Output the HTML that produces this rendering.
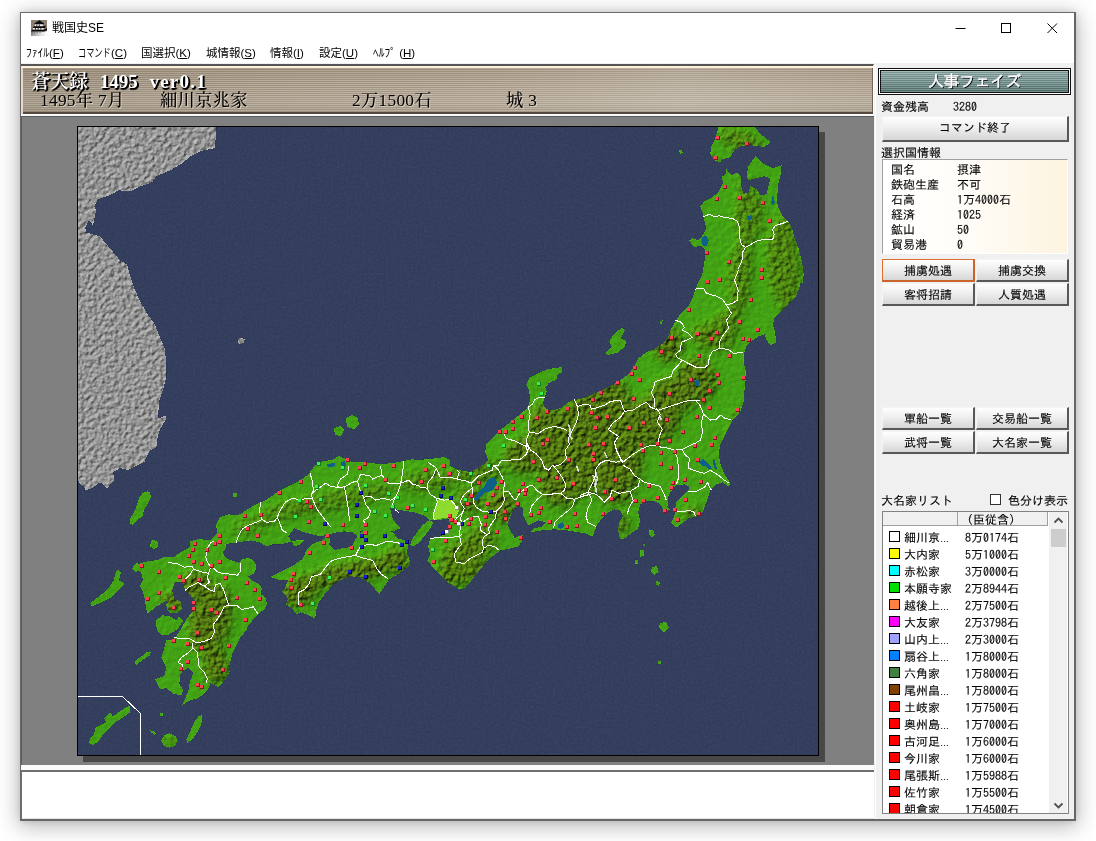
<!DOCTYPE html>
<html lang="ja">
<head>
<meta charset="utf-8">
<title>戦国史SE</title>
<style>
*{box-sizing:border-box;margin:0;padding:0}
html,body{width:1096px;height:841px;overflow:hidden;background:#fff}
body{position:relative;font-family:"Liberation Sans","IPAGothic","Noto Sans CJK JP",sans-serif;font-size:12px;color:#000}
.abs{position:absolute}
#win{position:absolute;left:20px;top:12px;width:1056px;height:809px;background:#f0f0f0;border:1px solid #6a6a6a;border-right:2px solid #666;border-bottom:2px solid #666;box-shadow:0 4px 20px 2px rgba(0,0,0,.27),0 0 6px rgba(0,0,0,.12)}
#title{position:absolute;left:0;top:0;width:1053px;height:30px;background:#fff}
#title .cap{position:absolute;left:31px;top:6px;font:12px/18px "Liberation Sans","Noto Sans CJK JP",sans-serif}
#menu{position:absolute;left:0;top:30px;width:1053px;height:20px;background:#fff;font:11.5px/20px "Liberation Sans","Noto Sans CJK JP",sans-serif;white-space:nowrap}
#menu>span{position:absolute;top:0}
#menu u{text-decoration:underline}
#hdr{position:absolute;left:0px;top:51px;width:853px;height:52px;border-top:2px solid #555;border-bottom:2px solid #fafafa;border-right:1px solid #fff;
 box-shadow:inset 0 2px 0 #fff0dc,inset 2px 0 0 #e6dac4,inset 0 -2px 0 #544a40,inset -1px 0 0 #6f655a;
 background:linear-gradient(90deg,rgba(0,0,0,.07) 0,rgba(0,0,0,.02) 25%,rgba(255,255,255,.04) 55%,rgba(255,255,255,.16) 78%,rgba(255,255,255,.06) 100%),linear-gradient(180deg,rgba(60,40,20,.10) 0,rgba(0,0,0,0) 40%,rgba(255,255,255,.08) 75%,rgba(0,0,0,.04) 100%),repeating-linear-gradient(180deg,#bdb19f 0,#bdb19f 1px,#a19381 1px,#a19381 2px)}
#hdr .l1{position:absolute;left:10px;top:4px;word-spacing:7px;font:600 19px/24px "Liberation Serif","Noto Serif CJK SC",serif;color:#fff;text-shadow:1px 1px 0 #000,2px 1px 0 #000,1px 2px 1px #000;white-space:pre}
#hdr .l2{position:absolute;top:23px;letter-spacing:.3px;font:500 17.300px/24px "Liberation Serif","Noto Serif CJK SC",serif;color:#000;text-shadow:1px 1px 0 rgba(225,215,200,.8);white-space:pre}
#mapbg{position:absolute;left:0;top:103px;width:853px;height:649px;background:#808080;border-top:1px solid #5a5a5a;border-left:1px solid #5a5a5a}
#msg{position:absolute;left:0;top:752px;width:853px;height:54px;background:#fff;border-top:5px solid #fbfbfb;box-shadow:inset 1px 2px 0 #6f6f6f,inset 0 -1px 0 #e3e3e3}
#side{position:absolute;left:854px;top:50px;width:199px;height:756px;background:#f0f0f0;border-left:1px solid #fff;font:12px/12px "IPAGothic","Noto Sans CJK JP",sans-serif}
#side .t{position:absolute;white-space:nowrap;-webkit-text-stroke:.1px #000;font:12px/12px "IPAGothic","Noto Sans CJK JP",sans-serif}
.btn{position:absolute;-webkit-text-stroke:.1px #000;background:linear-gradient(180deg,#fefefe 0,#efefef 45%,#d6d6d6 100%);border:1px solid #f4f4f4;border-right:2px solid #585858;border-bottom:2px solid #585858;text-align:center;font:12px/20px "IPAGothic","Noto Sans CJK JP",sans-serif}
</style>
</head>
<body>
<div id="win">
 <div id="title">
  <svg class="abs" style="left:10px;top:7px" width="16" height="16" viewBox="0 0 16 16"><defs><linearGradient id="icg" x1="0" y1="0" x2="1" y2="0"><stop offset="0" stop-color="#8f8f8c"/><stop offset=".55" stop-color="#d8d8d8"/><stop offset="1" stop-color="#fdfdfd"/></linearGradient></defs><rect width="16" height="16" fill="#8b8173"/><rect y="11.300" width="16" height="4.700" fill="url(#icg)"/><path d="M8.5 .2 L12.800 3.200 L13.200 4.300 H2.800 L3.600 3.200 Z" fill="#0b0b0b"/><rect x="3.800" y="4.400" width="8" height="1.900" fill="#f6f6f6"/><path d="M5.800 4.400v1.900M8.300 4.400v1.900" stroke="#222" stroke-width=".9"/><path d="M1.800 7.900 L2.800 6.300 H12.800 L14.800 5.300 L14.200 7.900 Z" fill="#0b0b0b"/><rect x="2" y="8" width="10.500" height="1.700" fill="#f6f6f6"/><path d="M4.500 8v1.700M7.200 8v1.700M9.800 8v1.700" stroke="#222" stroke-width=".9"/><path d="M0 11.600 L.8 9.700 H12.800 L16 8 V10 L13.500 11.600 Z" fill="#0b0b0b"/><path d="M1 12v1.600M3.200 12v1.300M6 12v1.300M9 12v1" stroke="#555" stroke-width=".8"/></svg>
  <div class="cap">戦国史SE</div>
  <svg class="abs" style="left:929px;top:9px" width="110" height="12" viewBox="0 0 110 12" fill="none" stroke="#000" stroke-width="1"><path d="M5.5 6.5 H15.5"/><rect x="51.5" y="1.500" width="9" height="9"/><path d="M97.5 1.500 L107 11 M107 1.500 L97.5 11"/></svg>
 </div>
 <div id="menu">
  <span style="left:5px">ﾌｧｲﾙ(<u>F</u>)</span>
  <span style="left:57px"><span style="display:inline-block;width:33px;transform:scaleX(.71);transform-origin:0 0;white-space:nowrap">コマンド</span>(<u>C</u>)</span>
  <span style="left:120px">国選択(<u>K</u>)</span>
  <span style="left:185px">城情報(<u>S</u>)</span>
  <span style="left:249px">情報(<u>I</u>)</span>
  <span style="left:298px">設定(<u>U</u>)</span>
  <span style="left:352px">ﾍﾙﾌﾟ (<u>H</u>)</span>
 </div>
 <div id="hdr">
  <div class="l1">蒼天録 <span style="letter-spacing:0">1495</span> <span style="letter-spacing:1.200px">ver0.1</span></div>
  <div class="l2" style="left:19px">1495年 7月</div>
  <div class="l2" style="left:139px">細川京兆家</div>
  <div class="l2" style="left:331px">2万1500石</div>
  <div class="l2" style="left:485px">城 3</div>
 </div>
 <div id="mapbg"></div>
 <div id="msg"></div>
 <div id="side"><div style="position:absolute;left:2px;top:5px;width:193px;height:27px;border:1px solid #111;background:#fff;padding:1px"><div style="width:100%;height:100%;border:1px solid #111;background:repeating-linear-gradient(180deg,rgba(255,255,255,.16) 0,rgba(255,255,255,.16) 1px,rgba(0,0,0,.14) 1px,rgba(0,0,0,.14) 2px),linear-gradient(180deg,#93b0ad 0,#7d9c99 45%,#587875 100%);text-align:center;font:16px/21px 'IPAGothic','Noto Sans CJK JP',sans-serif;color:#fff;-webkit-text-stroke:.4px #fff;text-shadow:1px 1px 0 #000;letter-spacing:-.5px">人事フェイズ</div></div><div class="t" style="left:5px;top:37px;">資金残高</div><div class="t" style="left:77px;top:37px;">3280</div><div class="btn" style="position:absolute;left:6px;top:53px;width:187px;height:26px;">コマンド終了</div><div class="t" style="left:5px;top:83px;">選択国情報</div><div style="position:absolute;left:6px;top:96px;width:186px;height:95px;border:1px solid #a0a0a0;border-right-color:#fff;border-bottom-color:#fff;background:linear-gradient(90deg,#ffffff 0,#fffdf8 45%,#fdf3e0 100%)"><div class="t" style="left:8px;top:3px">国名</div><div class="t" style="left:74px;top:3px">摂津</div><div class="t" style="left:8px;top:18px">鉄砲生産</div><div class="t" style="left:74px;top:18px">不可</div><div class="t" style="left:8px;top:33px">石高</div><div class="t" style="left:74px;top:33px">1万4000石</div><div class="t" style="left:8px;top:48px">経済</div><div class="t" style="left:74px;top:48px">1025</div><div class="t" style="left:8px;top:63px">鉱山</div><div class="t" style="left:74px;top:63px">50</div><div class="t" style="left:8px;top:78px">貿易港</div><div class="t" style="left:74px;top:78px">0</div></div><div class="btn" style="position:absolute;left:6px;top:196px;width:93px;height:23px;border:1px solid #e07030;border-right:2px solid #c8642c;border-bottom:2px solid #c8642c">捕虜処遇</div><div class="btn" style="position:absolute;left:100px;top:196px;width:93px;height:23px;">捕虜交換</div><div class="btn" style="position:absolute;left:6px;top:220px;width:93px;height:23px;">客将招請</div><div class="btn" style="position:absolute;left:100px;top:220px;width:93px;height:23px;">人質処遇</div><div class="btn" style="position:absolute;left:6px;top:344px;width:93px;height:23px;">軍船一覧</div><div class="btn" style="position:absolute;left:100px;top:344px;width:93px;height:23px;">交易船一覧</div><div class="btn" style="position:absolute;left:6px;top:368px;width:93px;height:23px;">武将一覧</div><div class="btn" style="position:absolute;left:100px;top:368px;width:93px;height:23px;">大名家一覧</div><div class="t" style="left:5px;top:431px;">大名家リスト</div><div style="position:absolute;left:114px;top:431px;width:11px;height:11px;border:1px solid #333;background:#fff"></div><div class="t" style="left:132px;top:431px;">色分け表示</div><div style="position:absolute;left:6px;top:448px;width:187px;height:303px;border:1px solid #828282;background:#fff;overflow:hidden"><div style="position:absolute;left:0;top:0;width:75px;height:14px;background:#f0f0f0;border-right:1px solid #a0a0a0;border-bottom:1px solid #a0a0a0"></div><div style="position:absolute;left:75px;top:0;width:90px;height:14px;background:#f0f0f0;border-right:1px solid #a0a0a0;border-bottom:1px solid #a0a0a0"><div class="t" style="left:3px;top:1px">（臣従含）</div></div><div style="position:absolute;left:166px;top:0;width:18px;height:301px;background:#f0f0f0"></div><div style="position:absolute;left:168px;top:17px;width:15px;height:18px;background:#cdcdcd"></div><svg style="position:absolute;left:170px;top:4px" width="11" height="8" viewBox="0 0 11 8"><path d="M1.5 6.500 L5.5 2.500 L9.5 6.500" fill="none" stroke="#505050" stroke-width="1.800"/></svg><svg style="position:absolute;left:170px;top:290px" width="11" height="8" viewBox="0 0 11 8"><path d="M1.5 1.500 L5.5 5.500 L9.5 1.500" fill="none" stroke="#505050" stroke-width="1.800"/></svg><div style="position:absolute;left:6px;top:19px;width:11px;height:11px;border:1px solid #000;background:#ffffff"></div><div class="t" style="left:21px;top:19px">細川京<span style="font-family:'Liberation Sans',sans-serif;font-size:9px">…</span></div><div class="t" style="left:82px;top:19px">8万0174石</div><div style="position:absolute;left:6px;top:36px;width:11px;height:11px;border:1px solid #000;background:#ffff00"></div><div class="t" style="left:21px;top:36px">大内家</div><div class="t" style="left:82px;top:36px">5万1000石</div><div style="position:absolute;left:6px;top:53px;width:11px;height:11px;border:1px solid #000;background:#00ffff"></div><div class="t" style="left:21px;top:53px">赤松家</div><div class="t" style="left:82px;top:53px">3万0000石</div><div style="position:absolute;left:6px;top:70px;width:11px;height:11px;border:1px solid #000;background:#00e000"></div><div class="t" style="left:21px;top:70px">本願寺家</div><div class="t" style="left:82px;top:70px">2万8944石</div><div style="position:absolute;left:6px;top:87px;width:11px;height:11px;border:1px solid #000;background:#ff8040"></div><div class="t" style="left:21px;top:87px">越後上<span style="font-family:'Liberation Sans',sans-serif;font-size:9px">…</span></div><div class="t" style="left:82px;top:87px">2万7500石</div><div style="position:absolute;left:6px;top:104px;width:11px;height:11px;border:1px solid #000;background:#ff00ff"></div><div class="t" style="left:21px;top:104px">大友家</div><div class="t" style="left:82px;top:104px">2万3798石</div><div style="position:absolute;left:6px;top:121px;width:11px;height:11px;border:1px solid #000;background:#a0a0ff"></div><div class="t" style="left:21px;top:121px">山内上<span style="font-family:'Liberation Sans',sans-serif;font-size:9px">…</span></div><div class="t" style="left:82px;top:121px">2万3000石</div><div style="position:absolute;left:6px;top:138px;width:11px;height:11px;border:1px solid #000;background:#0080ff"></div><div class="t" style="left:21px;top:138px">扇谷上<span style="font-family:'Liberation Sans',sans-serif;font-size:9px">…</span></div><div class="t" style="left:82px;top:138px">1万8000石</div><div style="position:absolute;left:6px;top:155px;width:11px;height:11px;border:1px solid #000;background:#408040"></div><div class="t" style="left:21px;top:155px">六角家</div><div class="t" style="left:82px;top:155px">1万8000石</div><div style="position:absolute;left:6px;top:172px;width:11px;height:11px;border:1px solid #000;background:#804000"></div><div class="t" style="left:21px;top:172px">尾州畠<span style="font-family:'Liberation Sans',sans-serif;font-size:9px">…</span></div><div class="t" style="left:82px;top:172px">1万8000石</div><div style="position:absolute;left:6px;top:189px;width:11px;height:11px;border:1px solid #000;background:#ff0000"></div><div class="t" style="left:21px;top:189px">土岐家</div><div class="t" style="left:82px;top:189px">1万7500石</div><div style="position:absolute;left:6px;top:206px;width:11px;height:11px;border:1px solid #000;background:#ff0000"></div><div class="t" style="left:21px;top:206px">奥州島<span style="font-family:'Liberation Sans',sans-serif;font-size:9px">…</span></div><div class="t" style="left:82px;top:206px">1万7000石</div><div style="position:absolute;left:6px;top:223px;width:11px;height:11px;border:1px solid #000;background:#ff0000"></div><div class="t" style="left:21px;top:223px">古河足<span style="font-family:'Liberation Sans',sans-serif;font-size:9px">…</span></div><div class="t" style="left:82px;top:223px">1万6000石</div><div style="position:absolute;left:6px;top:240px;width:11px;height:11px;border:1px solid #000;background:#ff0000"></div><div class="t" style="left:21px;top:240px">今川家</div><div class="t" style="left:82px;top:240px">1万6000石</div><div style="position:absolute;left:6px;top:257px;width:11px;height:11px;border:1px solid #000;background:#ff0000"></div><div class="t" style="left:21px;top:257px">尾張斯<span style="font-family:'Liberation Sans',sans-serif;font-size:9px">…</span></div><div class="t" style="left:82px;top:257px">1万5988石</div><div style="position:absolute;left:6px;top:274px;width:11px;height:11px;border:1px solid #000;background:#ff0000"></div><div class="t" style="left:21px;top:274px">佐竹家</div><div class="t" style="left:82px;top:274px">1万5500石</div><div style="position:absolute;left:6px;top:291px;width:11px;height:11px;border:1px solid #000;background:#ff0000"></div><div class="t" style="left:21px;top:291px">朝倉家</div><div class="t" style="left:82px;top:291px">1万4500石</div></div></div><!--/side-->
</div>
<!--MAP--><div class="abs" style="left:819px;top:132px;width:6px;height:630px;background:#484848"></div><div class="abs" style="left:83px;top:756px;width:742px;height:6px;background:#484848"></div><svg class="abs" style="left:77px;top:126px" width="742" height="630" viewBox="77 126 742 630" shape-rendering="crispEdges">
<defs>
<filter id="fsea" filterUnits="userSpaceOnUse" x="78" y="127" width="740" height="628"><feTurbulence type="fractalNoise" baseFrequency="0.45" numOctaves="2" seed="3"/><feColorMatrix type="matrix" values="0 0 0 0 1  0 0 0 0 1  0 0 0 0 1  0.9 0.9 0 0 -0.62"/></filter>
<filter id="frel" filterUnits="userSpaceOnUse" x="78" y="127" width="740" height="628" color-interpolation-filters="sRGB"><feGaussianBlur in="SourceAlpha" stdDeviation="5" result="m"/><feComponentTransfer in="m" result="m2"><feFuncA type="linear" slope="0.88" intercept="0.12"/></feComponentTransfer><feTurbulence type="fractalNoise" baseFrequency="0.2" numOctaves="3" seed="11" result="n"/><feComposite in="n" in2="m2" operator="in" result="h"/><feDiffuseLighting in="h" surfaceScale="2.8" diffuseConstant="0.98" lighting-color="#fff"><feDistantLight azimuth="225" elevation="50"/></feDiffuseLighting></filter>
<filter id="fkor" filterUnits="userSpaceOnUse" x="78" y="127" width="740" height="628" color-interpolation-filters="sRGB"><feTurbulence type="fractalNoise" baseFrequency="0.24" numOctaves="3" seed="5" result="n"/><feDiffuseLighting in="n" surfaceScale="1.5" diffuseConstant="0.86" lighting-color="#fff"><feDistantLight azimuth="225" elevation="50"/></feDiffuseLighting></filter>
<filter id="blur4" filterUnits="userSpaceOnUse" x="78" y="127" width="740" height="628"><feGaussianBlur stdDeviation="4"/></filter>
<clipPath id="cland"><path d="M219.4,534.5 224.8,539.1 226,547.1 222.4,553.1 227.4,559.1 238.5,562.6 241.5,559.7 249.5,557.7 254.9,562.2 256.5,568.2 253.5,573.8 248.1,576.6 251.5,580.2 258.9,583.8 262,588.2 260.5,593.9 265.6,597.9 267,604.3 264.2,609.3 258.1,613.9 253.5,619.4 248.5,624.8 246.5,630 240.5,637.4 236.1,645.5 232.4,653.5 230.4,661.5 228.4,669.5 230.6,670.1 224.6,680.1 218.5,687.2 210.5,683.2 207.5,690.2 198.5,698.2 190.4,700.2 181.8,705.2 185.4,698.2 188.4,690.2 190,681.1 193.4,673.1 188.4,668.1 183.4,670.1 180,675.1 179.4,684.2 183.4,690.2 181.4,695.2 174.4,694.2 166.4,688.2 160.3,689.2 155.3,679.1 164.3,676.1 166.4,668.1 161.3,658.1 164.3,648 166.4,640 171.2,640.4 176.2,636.4 180.7,629.4 186.3,619.4 190.3,614.3 195.1,609.3 195.3,601.3 189.9,594.7 185.3,590.3 182.7,581.8 174.6,582.2 172.2,590.3 174.2,599.3 168.2,600.3 162.6,602.7 156.6,606.3 147.7,613.3 146.1,608.3 145.1,600.3 143.1,592.3 140.1,586.2 143.1,580.2 141.1,572.6 134.1,569.2 140.1,563.2 148.1,561.1 158.2,560.1 164.2,557.1 174.2,557.1 180.3,552.1 189.3,548.1 190.3,541.1 198.3,539.1 210.4,540.1 216.4,534.1Z M168.2,600.3 174.2,598.7 180.3,601.3 181.7,608.3 178.2,612.7 171.2,613.3 167.2,609.3 166.2,604.3Z M156.2,620.4 162.2,615.3 170.2,616.4 176.2,620.4 179.3,616.4 183.3,620.4 178.2,628.4 172.2,632.4 167.2,635.4 160.2,634.4 156.6,628.4Z M118,569.2 121,572.2 119,580.2 124.5,583.8 120,588.2 115,593.3 111,597.3 102,602.3 91.9,606.3 89.9,603.3 98,597.3 104,592.3 110,586.2 114,580.2 115,573.2Z M136.1,563.2 142.1,564.2 140.1,570.2 135.1,572.2 132.1,568.2Z M134.2,663.1 137.2,659.1 143.3,655.1 147.3,651.6 150.7,652.4 149.9,655.7 145.3,658.1 140.3,661.7 136.2,665.1Z M201.5,715.3 202.5,720.3 200.5,726.3 196.5,733.3 192.4,739.4 187.4,742.8 186.4,739.4 189.4,733.3 192.4,726.3 195.5,720.3 198.5,716.3Z M164.3,735.3 169.4,733.3 175.4,735.9 178,740.4 175.4,745.4 169.4,747.8 163.9,745.4 161.3,740.4Z M159.9,713.3 162.7,713.3 162.7,715.9 159.9,715.9Z M150.3,730.3 153.3,731.3 156.3,734.3 154.3,734.7 151.3,732.7Z M130.2,705.2 129.8,712.3 123.2,717.3 115.2,722.3 109.1,728.3 103.1,734.3 99.1,740.4 93.1,745.4 89.1,742.8 90.1,738.4 94.1,734.3 95.1,728.3 100.1,725.3 106.1,722.7 104.1,717.9 110.1,712.7 113.2,716.3 120.2,711.3 126.2,707.2Z M217.1,534.3 216.1,524.3 220.1,517.3 228.1,514.3 238.1,515.3 246.2,510.3 256.2,504.2 266.2,500.2 274.3,494.2 280.3,490.2 290.3,485.2 300.4,480.1 308.4,474.1 314.4,466.1 322.4,461.1 332.5,460.1 338.5,456.1 346.5,459.1 352.6,462.1 360.6,462.1 370.6,463.1 380.7,464.1 392.7,463.1 402.7,461.1 412.8,459.1 416.1,460.1 430.1,459.1 444.2,457.1 450.2,460.1 450.2,466.1 458.2,470.1 470.3,472.1 478.3,468.1 484.3,464.1 488.4,460.1 485.3,452 486.4,444 490.4,440 494.1,436.4 500.1,430.4 510.1,422.3 520.1,414.3 527.2,408.3 530.2,400.3 529.2,390.2 526.2,384.2 530.2,377.2 538.2,373.2 548.2,369.1 562.3,367.1 562.3,371.1 557.3,375.2 556.3,380.2 549.3,382.6 545.2,387.2 546.6,391.2 544.6,398.2 542.6,403.9 546.2,409.3 554.3,410.3 562.3,407.3 568.3,402.3 574.3,399.3 584.4,398.2 592.4,394.2 602.4,390.2 612.5,385.2 620.5,380.2 628.5,374.2 634.6,366.1 638.6,358.1 646.6,352.1 654.6,349.1 664.7,342 669.7,334 670.3,330.3 676.3,320.3 680.3,314.2 688.3,306.2 692.3,298.2 695.3,290.1 698.4,282.1 702.4,274.1 704.4,262 705.4,250 704.3,248.5 700.3,245.5 694.3,247.5 689.3,240.4 692.3,238.4 698.3,240.4 703.3,234.4 706.3,228.4 704.3,220.4 703.3,214.3 700.3,206.3 704.3,201.3 712.3,197.3 718.4,192.3 723.4,182.2 721.4,177.2 725.4,174.2 726.4,169.2 731.4,175.2 736.4,172.6 741.4,176.2 741.4,186.2 743.4,194.3 748.5,192.3 750.5,186.2 756.5,189.3 760.5,195.3 766.5,194.3 768.5,186.2 770.5,178.2 764.5,176.2 756.5,178.2 748.5,180.2 746.5,176.2 748.5,166.2 755.5,156.1 762.5,163.2 772.6,168.2 781.6,165.2 780.6,174.2 778.6,182.2 777.6,192.3 776.6,200.3 778.6,208.3 782.6,216.4 788.6,222.4 792.6,230.4 794.6,238.4 798.6,248.5 801.7,260.5 803.7,274.6 802.7,282.6 800.7,282.1 798.7,290.1 794.7,298.2 786.7,306.2 780.7,312.2 774.6,318.2 772.6,324.3 774.6,330.3 776.6,342.3 770.6,345.3 766.6,340.3 764.6,334.3 758.6,336.3 752.6,340.3 746.5,346.4 743.5,354.4 743.5,362.4 745.5,370.4 745.5,380.5 744.5,390.5 743.5,402.6 740.5,410.6 738.6,414.1 732.6,420.1 728.5,428.1 724.5,436.1 720.5,444.2 718.5,454.2 720.5,464.2 724.5,474.3 730.5,483.3 728.5,486.3 722.5,482.3 716.5,484.3 710.5,490.3 708.5,496.4 705.5,504.4 702.4,512.4 696.4,516.4 688.4,518.4 680.4,524.5 676.4,527.5 671.3,522.4 674.3,516.4 675.3,508.4 676.4,502.4 682.4,496.4 688.4,490.3 689.4,486.3 684.4,484.3 676.4,485.3 672.3,489.3 668.3,496.4 668.3,502.4 667.3,506.4 670.3,509.4 665.3,512.4 660.3,504.4 654.3,501.4 646.2,501.4 640.2,504.4 638.2,512.4 640.2,520.4 638.2,528.5 632.2,532.5 624.2,538.5 620.1,539.5 618.1,530.5 619.1,522.4 623.2,516.4 620.1,510.4 614.1,509.4 608.1,512.4 602.1,518.4 597.1,524.5 594.1,532.5 592,536.5 586,533.5 578.7,532.3 566.6,530.3 554.6,529.3 542.6,530.3 530.5,532.3 534.5,528.3 542.6,526.3 546.6,522.3 538.5,520.3 530.5,524.3 528.5,525.3 526.5,522.3 523.5,516.3 522.5,508.2 518.5,505.2 514.5,508.2 510.4,516.3 507.4,524.3 510.4,530.3 514.5,538.4 518.5,536.4 523.5,534.3 522.5,540.4 518.5,546.4 510.4,548.4 500.4,550.4 492.4,556.4 484.3,564.5 474.3,576.5 468.3,584.5 462.3,589.5 458.2,588.5 448.2,582.5 440.2,574.5 432.2,566.5 427.1,560.4 430.1,554.4 428.1,546.4 430.1,538.4 440.2,536.4 448.2,532.3 450.2,524.3 448.2,518.3 438.2,520.3 430.1,520.3 426.1,516.3 414.1,512.3 402,510.3 390,508.2 392.7,518.3 396.7,524.3 386.7,526.3 376.6,528.3 366.6,526.3 356.6,524.3 348.5,526.3 338.5,528.3 328.5,528.3 320.4,531.3 312.4,534.3 304.4,532.3 294.3,528.3 288.3,536.4 294.3,546.4 286.3,549.4 280.3,552.4 274.3,550.4 266.2,546.4 260.2,542.4 250.2,540.4 238.1,542.4 230.1,543.4 222.1,544.4 218.1,540.4Z M270,576.8 282,570.8 294.1,564.8 303.1,558.5 306.1,550.1 313.2,543.7 322.6,540.1 327.2,534.1 330.2,537.1 329.2,545.1 334.2,550.1 342.3,548.1 351.3,547.1 354.3,541.1 358.3,535.1 364.3,529 374.4,526 384.4,528 392.4,532 398.5,539.1 406.5,540.1 408.5,546.1 406.5,552.1 410.5,562.2 408.5,566.2 400.5,572.2 394.5,576.2 388.4,580.2 384.4,586.2 379.4,594.3 374.4,588.2 368.4,582.2 360.3,577.2 350.3,576.2 342.3,579.2 333.2,584.2 325.2,593.3 319.2,601.3 316.6,608.3 315.2,618.4 306.1,614.3 300.1,612.3 296.1,614.3 292.1,608.3 286.1,604.3 288.1,598.3 282,591.3 285.1,588.2 288.1,580.2 280,580.2Z M429.1,520.3 433.2,522.3 430.1,528.3 425.1,535.3 420.1,541.4 414.1,546.4 410.1,545.4 412.1,539.4 417.1,532.3 422.1,525.3Z M312.4,534.3 320.4,531.3 328.5,528.3 338.5,528.3 348.5,526.3 356.6,524.3 366.6,526.3 376.6,528.3 386.7,526.3 396.7,524.3 400.7,528.3 392.7,531.3 380.7,530.3 370.6,529.3 360.6,530.7 358.6,536.4 352.6,532.3 344.5,531.3 336.5,532.3 328.5,534.3 320.4,536.4Z M266.2,546.4 274.3,550.4 280.3,552.4 286.3,549.4 294.3,546.4 300.4,544.4 304.4,540.4 296.4,540.4 288.3,542.4 280.3,544.4 272.3,544.4Z M346,418 352,415 358,418 359,425 354,429 347,427Z M334,428 340,426 344,430 341,436 335,435Z M233,493 237,493 237,497 233,497Z M622.1,327.3 625.1,330.3 621.1,338.3 626.1,341.3 625.1,346.4 618.1,352.4 607,355.4 606,352.4 612,346.4 609,341.3 614.1,334.3Z M659.8,321.3 662.6,320.3 662.2,323.3 659.8,324.3Z M718.4,126.6 754.5,126.6 760.5,134.1 770.5,142.1 764.5,147.1 758.5,146.1 748.5,145.1 740.4,146.1 734.4,150.1 730.4,157.1 722.4,159.1 720.4,162.2 714.3,160.1 710.3,154.1 711.3,146.1 714.3,140.1 717.4,132Z M679.2,150.1 682.2,150.1 682.6,153.1 679.8,153.7Z M649.3,530.5 653.3,530.1 654.7,534.5 651.9,537.5 648.9,534.9Z M147.3,491.2 150.3,492.6 150.7,497.2 147.3,504.2 144.3,509.3 142.3,516.3 137.2,520.3 132.6,524.7 129.8,523.3 130.2,518.3 134.2,512.3 137.2,504.2 139.3,497.2 142.7,493.2Z M153.3,539.4 157.9,542.4 158.3,546.4 154.3,549.4 150.3,546.4 150.7,542Z M642.6,543.5 645.4,543.5 645.4,546.1 642.6,546.1Z M640.2,550.5 644.2,549.5 643.8,555.6 640.2,556.6Z M634.6,559.6 638.2,559.6 638.2,563.6 634.6,563.6Z M652,567 657,566 659,572 654,575 651,571Z M656,581 660,582 659,586 656,585Z M660,623 666,622 669,628 664,632 659,628Z M658,661 661,661 661,664 658,664Z"/></clipPath>
<clipPath id="ckor"><path d="M216.5,127 214.9,148.1 200.5,151.1 190.4,156.1 182.4,163.2 170.4,170.2 156.3,176.2 152.3,182.2 138.2,187.2 130.2,191.3 118.2,190.3 110.1,195.3 98.1,199.3 94.1,206.3 96.1,210.3 93.1,225.4 89.1,220.4 85.1,227.4 86.1,232.4 100.1,236.4 110.1,248.5 120.2,260.5 127.2,264.5 130.2,276.6 134.2,288 139.3,300.1 147.3,314.1 154.3,323.2 160.3,338.2 164.7,348.2 166.4,364.3 166.4,376.4 163.3,388.4 159.3,400.4 158.3,412.5 158.3,418.5 165.3,415.5 166.4,418.5 160.3,428.5 157.3,438.6 156.3,448 155.3,448 149.3,451 144.3,462.1 136.2,466.1 128.2,470.1 120.2,468.1 113.2,472.1 114.2,480.1 107.1,488.2 100.1,482.2 92.1,488.2 86.1,490.2 79,482.2 77.6,480.1 77.5,127Z M237.6,339.2 240.6,337.6 244.6,339.2 244.2,342.2 241,344.6 238.2,342.6Z"/></clipPath>
</defs>
<rect x="77" y="126" width="742" height="630" fill="#000"/>
<rect x="78" y="127" width="740" height="628" fill="#313b5b"/>
<rect x="78" y="127" width="740" height="628" fill="#fff" filter="url(#fsea)" opacity="0.06"/>
<svg x="78" y="127" width="740" height="628" viewBox="78 127 740 628">
<path d="M216.5,127 214.9,148.1 200.5,151.1 190.4,156.1 182.4,163.2 170.4,170.2 156.3,176.2 152.3,182.2 138.2,187.2 130.2,191.3 118.2,190.3 110.1,195.3 98.1,199.3 94.1,206.3 96.1,210.3 93.1,225.4 89.1,220.4 85.1,227.4 86.1,232.4 100.1,236.4 110.1,248.5 120.2,260.5 127.2,264.5 130.2,276.6 134.2,288 139.3,300.1 147.3,314.1 154.3,323.2 160.3,338.2 164.7,348.2 166.4,364.3 166.4,376.4 163.3,388.4 159.3,400.4 158.3,412.5 158.3,418.5 165.3,415.5 166.4,418.5 160.3,428.5 157.3,438.6 156.3,448 155.3,448 149.3,451 144.3,462.1 136.2,466.1 128.2,470.1 120.2,468.1 113.2,472.1 114.2,480.1 107.1,488.2 100.1,482.2 92.1,488.2 86.1,490.2 79,482.2 77.6,480.1 77.5,127Z M237.6,339.2 240.6,337.6 244.6,339.2 244.2,342.2 241,344.6 238.2,342.6Z" fill="#e4e4e4"/>
<g clip-path="url(#ckor)" style="mix-blend-mode:multiply"><rect x="78" y="127" width="740" height="628" fill="#fff" filter="url(#fkor)"/></g>
<path d="M219.4,534.5 224.8,539.1 226,547.1 222.4,553.1 227.4,559.1 238.5,562.6 241.5,559.7 249.5,557.7 254.9,562.2 256.5,568.2 253.5,573.8 248.1,576.6 251.5,580.2 258.9,583.8 262,588.2 260.5,593.9 265.6,597.9 267,604.3 264.2,609.3 258.1,613.9 253.5,619.4 248.5,624.8 246.5,630 240.5,637.4 236.1,645.5 232.4,653.5 230.4,661.5 228.4,669.5 230.6,670.1 224.6,680.1 218.5,687.2 210.5,683.2 207.5,690.2 198.5,698.2 190.4,700.2 181.8,705.2 185.4,698.2 188.4,690.2 190,681.1 193.4,673.1 188.4,668.1 183.4,670.1 180,675.1 179.4,684.2 183.4,690.2 181.4,695.2 174.4,694.2 166.4,688.2 160.3,689.2 155.3,679.1 164.3,676.1 166.4,668.1 161.3,658.1 164.3,648 166.4,640 171.2,640.4 176.2,636.4 180.7,629.4 186.3,619.4 190.3,614.3 195.1,609.3 195.3,601.3 189.9,594.7 185.3,590.3 182.7,581.8 174.6,582.2 172.2,590.3 174.2,599.3 168.2,600.3 162.6,602.7 156.6,606.3 147.7,613.3 146.1,608.3 145.1,600.3 143.1,592.3 140.1,586.2 143.1,580.2 141.1,572.6 134.1,569.2 140.1,563.2 148.1,561.1 158.2,560.1 164.2,557.1 174.2,557.1 180.3,552.1 189.3,548.1 190.3,541.1 198.3,539.1 210.4,540.1 216.4,534.1Z M168.2,600.3 174.2,598.7 180.3,601.3 181.7,608.3 178.2,612.7 171.2,613.3 167.2,609.3 166.2,604.3Z M156.2,620.4 162.2,615.3 170.2,616.4 176.2,620.4 179.3,616.4 183.3,620.4 178.2,628.4 172.2,632.4 167.2,635.4 160.2,634.4 156.6,628.4Z M118,569.2 121,572.2 119,580.2 124.5,583.8 120,588.2 115,593.3 111,597.3 102,602.3 91.9,606.3 89.9,603.3 98,597.3 104,592.3 110,586.2 114,580.2 115,573.2Z M136.1,563.2 142.1,564.2 140.1,570.2 135.1,572.2 132.1,568.2Z M134.2,663.1 137.2,659.1 143.3,655.1 147.3,651.6 150.7,652.4 149.9,655.7 145.3,658.1 140.3,661.7 136.2,665.1Z M201.5,715.3 202.5,720.3 200.5,726.3 196.5,733.3 192.4,739.4 187.4,742.8 186.4,739.4 189.4,733.3 192.4,726.3 195.5,720.3 198.5,716.3Z M164.3,735.3 169.4,733.3 175.4,735.9 178,740.4 175.4,745.4 169.4,747.8 163.9,745.4 161.3,740.4Z M159.9,713.3 162.7,713.3 162.7,715.9 159.9,715.9Z M150.3,730.3 153.3,731.3 156.3,734.3 154.3,734.7 151.3,732.7Z M130.2,705.2 129.8,712.3 123.2,717.3 115.2,722.3 109.1,728.3 103.1,734.3 99.1,740.4 93.1,745.4 89.1,742.8 90.1,738.4 94.1,734.3 95.1,728.3 100.1,725.3 106.1,722.7 104.1,717.9 110.1,712.7 113.2,716.3 120.2,711.3 126.2,707.2Z M217.1,534.3 216.1,524.3 220.1,517.3 228.1,514.3 238.1,515.3 246.2,510.3 256.2,504.2 266.2,500.2 274.3,494.2 280.3,490.2 290.3,485.2 300.4,480.1 308.4,474.1 314.4,466.1 322.4,461.1 332.5,460.1 338.5,456.1 346.5,459.1 352.6,462.1 360.6,462.1 370.6,463.1 380.7,464.1 392.7,463.1 402.7,461.1 412.8,459.1 416.1,460.1 430.1,459.1 444.2,457.1 450.2,460.1 450.2,466.1 458.2,470.1 470.3,472.1 478.3,468.1 484.3,464.1 488.4,460.1 485.3,452 486.4,444 490.4,440 494.1,436.4 500.1,430.4 510.1,422.3 520.1,414.3 527.2,408.3 530.2,400.3 529.2,390.2 526.2,384.2 530.2,377.2 538.2,373.2 548.2,369.1 562.3,367.1 562.3,371.1 557.3,375.2 556.3,380.2 549.3,382.6 545.2,387.2 546.6,391.2 544.6,398.2 542.6,403.9 546.2,409.3 554.3,410.3 562.3,407.3 568.3,402.3 574.3,399.3 584.4,398.2 592.4,394.2 602.4,390.2 612.5,385.2 620.5,380.2 628.5,374.2 634.6,366.1 638.6,358.1 646.6,352.1 654.6,349.1 664.7,342 669.7,334 670.3,330.3 676.3,320.3 680.3,314.2 688.3,306.2 692.3,298.2 695.3,290.1 698.4,282.1 702.4,274.1 704.4,262 705.4,250 704.3,248.5 700.3,245.5 694.3,247.5 689.3,240.4 692.3,238.4 698.3,240.4 703.3,234.4 706.3,228.4 704.3,220.4 703.3,214.3 700.3,206.3 704.3,201.3 712.3,197.3 718.4,192.3 723.4,182.2 721.4,177.2 725.4,174.2 726.4,169.2 731.4,175.2 736.4,172.6 741.4,176.2 741.4,186.2 743.4,194.3 748.5,192.3 750.5,186.2 756.5,189.3 760.5,195.3 766.5,194.3 768.5,186.2 770.5,178.2 764.5,176.2 756.5,178.2 748.5,180.2 746.5,176.2 748.5,166.2 755.5,156.1 762.5,163.2 772.6,168.2 781.6,165.2 780.6,174.2 778.6,182.2 777.6,192.3 776.6,200.3 778.6,208.3 782.6,216.4 788.6,222.4 792.6,230.4 794.6,238.4 798.6,248.5 801.7,260.5 803.7,274.6 802.7,282.6 800.7,282.1 798.7,290.1 794.7,298.2 786.7,306.2 780.7,312.2 774.6,318.2 772.6,324.3 774.6,330.3 776.6,342.3 770.6,345.3 766.6,340.3 764.6,334.3 758.6,336.3 752.6,340.3 746.5,346.4 743.5,354.4 743.5,362.4 745.5,370.4 745.5,380.5 744.5,390.5 743.5,402.6 740.5,410.6 738.6,414.1 732.6,420.1 728.5,428.1 724.5,436.1 720.5,444.2 718.5,454.2 720.5,464.2 724.5,474.3 730.5,483.3 728.5,486.3 722.5,482.3 716.5,484.3 710.5,490.3 708.5,496.4 705.5,504.4 702.4,512.4 696.4,516.4 688.4,518.4 680.4,524.5 676.4,527.5 671.3,522.4 674.3,516.4 675.3,508.4 676.4,502.4 682.4,496.4 688.4,490.3 689.4,486.3 684.4,484.3 676.4,485.3 672.3,489.3 668.3,496.4 668.3,502.4 667.3,506.4 670.3,509.4 665.3,512.4 660.3,504.4 654.3,501.4 646.2,501.4 640.2,504.4 638.2,512.4 640.2,520.4 638.2,528.5 632.2,532.5 624.2,538.5 620.1,539.5 618.1,530.5 619.1,522.4 623.2,516.4 620.1,510.4 614.1,509.4 608.1,512.4 602.1,518.4 597.1,524.5 594.1,532.5 592,536.5 586,533.5 578.7,532.3 566.6,530.3 554.6,529.3 542.6,530.3 530.5,532.3 534.5,528.3 542.6,526.3 546.6,522.3 538.5,520.3 530.5,524.3 528.5,525.3 526.5,522.3 523.5,516.3 522.5,508.2 518.5,505.2 514.5,508.2 510.4,516.3 507.4,524.3 510.4,530.3 514.5,538.4 518.5,536.4 523.5,534.3 522.5,540.4 518.5,546.4 510.4,548.4 500.4,550.4 492.4,556.4 484.3,564.5 474.3,576.5 468.3,584.5 462.3,589.5 458.2,588.5 448.2,582.5 440.2,574.5 432.2,566.5 427.1,560.4 430.1,554.4 428.1,546.4 430.1,538.4 440.2,536.4 448.2,532.3 450.2,524.3 448.2,518.3 438.2,520.3 430.1,520.3 426.1,516.3 414.1,512.3 402,510.3 390,508.2 392.7,518.3 396.7,524.3 386.7,526.3 376.6,528.3 366.6,526.3 356.6,524.3 348.5,526.3 338.5,528.3 328.5,528.3 320.4,531.3 312.4,534.3 304.4,532.3 294.3,528.3 288.3,536.4 294.3,546.4 286.3,549.4 280.3,552.4 274.3,550.4 266.2,546.4 260.2,542.4 250.2,540.4 238.1,542.4 230.1,543.4 222.1,544.4 218.1,540.4Z M270,576.8 282,570.8 294.1,564.8 303.1,558.5 306.1,550.1 313.2,543.7 322.6,540.1 327.2,534.1 330.2,537.1 329.2,545.1 334.2,550.1 342.3,548.1 351.3,547.1 354.3,541.1 358.3,535.1 364.3,529 374.4,526 384.4,528 392.4,532 398.5,539.1 406.5,540.1 408.5,546.1 406.5,552.1 410.5,562.2 408.5,566.2 400.5,572.2 394.5,576.2 388.4,580.2 384.4,586.2 379.4,594.3 374.4,588.2 368.4,582.2 360.3,577.2 350.3,576.2 342.3,579.2 333.2,584.2 325.2,593.3 319.2,601.3 316.6,608.3 315.2,618.4 306.1,614.3 300.1,612.3 296.1,614.3 292.1,608.3 286.1,604.3 288.1,598.3 282,591.3 285.1,588.2 288.1,580.2 280,580.2Z M429.1,520.3 433.2,522.3 430.1,528.3 425.1,535.3 420.1,541.4 414.1,546.4 410.1,545.4 412.1,539.4 417.1,532.3 422.1,525.3Z M312.4,534.3 320.4,531.3 328.5,528.3 338.5,528.3 348.5,526.3 356.6,524.3 366.6,526.3 376.6,528.3 386.7,526.3 396.7,524.3 400.7,528.3 392.7,531.3 380.7,530.3 370.6,529.3 360.6,530.7 358.6,536.4 352.6,532.3 344.5,531.3 336.5,532.3 328.5,534.3 320.4,536.4Z M266.2,546.4 274.3,550.4 280.3,552.4 286.3,549.4 294.3,546.4 300.4,544.4 304.4,540.4 296.4,540.4 288.3,542.4 280.3,544.4 272.3,544.4Z M346,418 352,415 358,418 359,425 354,429 347,427Z M334,428 340,426 344,430 341,436 335,435Z M233,493 237,493 237,497 233,497Z M622.1,327.3 625.1,330.3 621.1,338.3 626.1,341.3 625.1,346.4 618.1,352.4 607,355.4 606,352.4 612,346.4 609,341.3 614.1,334.3Z M659.8,321.3 662.6,320.3 662.2,323.3 659.8,324.3Z M718.4,126.6 754.5,126.6 760.5,134.1 770.5,142.1 764.5,147.1 758.5,146.1 748.5,145.1 740.4,146.1 734.4,150.1 730.4,157.1 722.4,159.1 720.4,162.2 714.3,160.1 710.3,154.1 711.3,146.1 714.3,140.1 717.4,132Z M679.2,150.1 682.2,150.1 682.6,153.1 679.8,153.7Z M649.3,530.5 653.3,530.1 654.7,534.5 651.9,537.5 648.9,534.9Z M147.3,491.2 150.3,492.6 150.7,497.2 147.3,504.2 144.3,509.3 142.3,516.3 137.2,520.3 132.6,524.7 129.8,523.3 130.2,518.3 134.2,512.3 137.2,504.2 139.3,497.2 142.7,493.2Z M153.3,539.4 157.9,542.4 158.3,546.4 154.3,549.4 150.3,546.4 150.7,542Z M642.6,543.5 645.4,543.5 645.4,546.1 642.6,546.1Z M640.2,550.5 644.2,549.5 643.8,555.6 640.2,556.6Z M634.6,559.6 638.2,559.6 638.2,563.6 634.6,563.6Z M652,567 657,566 659,572 654,575 651,571Z M656,581 660,582 659,586 656,585Z M660,623 666,622 669,628 664,632 659,628Z M658,661 661,661 661,664 658,664Z" fill="#58d81a"/>
<g clip-path="url(#cland)"><g filter="url(#blur4)" opacity="0.6"><ellipse cx="585" cy="445" rx="38" ry="50" transform="rotate(10 585 445)" fill="#7d7a12"/><ellipse cx="618" cy="470" rx="22" ry="34" transform="rotate(20 618 470)" fill="#7d7a12"/><ellipse cx="600" cy="400" rx="30" ry="26" transform="rotate(0 600 400)" fill="#7d7a12"/><ellipse cx="560" cy="480" rx="22" ry="26" transform="rotate(0 560 480)" fill="#7d7a12"/><ellipse cx="650" cy="420" rx="30" ry="24" transform="rotate(-20 650 420)" fill="#7d7a12"/><ellipse cx="525" cy="455" rx="22" ry="18" transform="rotate(0 525 455)" fill="#7d7a12"/><ellipse cx="545" cy="425" rx="18" ry="22" transform="rotate(0 545 425)" fill="#7d7a12"/><ellipse cx="748" cy="215" rx="14" ry="28" transform="rotate(0 748 215)" fill="#7d7a12" opacity="0.65"/><ellipse cx="740" cy="275" rx="11" ry="40" transform="rotate(5 740 275)" fill="#7d7a12" opacity="0.7"/><ellipse cx="722" cy="330" rx="14" ry="22" transform="rotate(25 722 330)" fill="#7d7a12" opacity="0.7"/><ellipse cx="703" cy="335" rx="12" ry="12" transform="rotate(0 703 335)" fill="#7d7a12" opacity="0.75"/><ellipse cx="695" cy="380" rx="20" ry="22" transform="rotate(0 695 380)" fill="#7d7a12"/><ellipse cx="668" cy="345" rx="14" ry="16" transform="rotate(15 668 345)" fill="#7d7a12"/><ellipse cx="672" cy="395" rx="22" ry="18" transform="rotate(0 672 395)" fill="#7d7a12"/><ellipse cx="783" cy="265" rx="17" ry="45" transform="rotate(-5 783 265)" fill="#7d7a12" opacity="0.7"/><ellipse cx="790" cy="215" rx="10" ry="20" transform="rotate(0 790 215)" fill="#7d7a12" opacity="0.6"/><ellipse cx="738" cy="430" rx="10" ry="25" transform="rotate(10 738 430)" fill="#7d7a12" opacity="0.5"/><ellipse cx="700" cy="165" rx="16" ry="10" transform="rotate(0 700 165)" fill="#7d7a12" opacity="0.6"/><ellipse cx="740" cy="140" rx="22" ry="10" transform="rotate(20 740 140)" fill="#7d7a12" opacity="0.7"/><ellipse cx="745" cy="185" rx="8" ry="10" transform="rotate(0 745 185)" fill="#7d7a12" opacity="0.5"/><ellipse cx="462" cy="562" rx="22" ry="22" transform="rotate(0 462 562)" fill="#7d7a12" opacity="0.85"/><ellipse cx="480" cy="540" rx="15" ry="15" transform="rotate(0 480 540)" fill="#7d7a12" opacity="0.8"/><ellipse cx="442" cy="580" rx="13" ry="11" transform="rotate(0 442 580)" fill="#7d7a12" opacity="0.7"/><ellipse cx="350" cy="572" rx="46" ry="11" transform="rotate(-12 350 572)" fill="#7d7a12"/><ellipse cx="300" cy="590" rx="22" ry="14" transform="rotate(-30 300 590)" fill="#7d7a12"/><ellipse cx="395" cy="560" rx="14" ry="12" transform="rotate(0 395 560)" fill="#7d7a12"/><ellipse cx="340" cy="498" rx="55" ry="10" transform="rotate(-12 340 498)" fill="#7d7a12" opacity="0.6"/><ellipse cx="285" cy="510" rx="28" ry="8" transform="rotate(-15 285 510)" fill="#7d7a12" opacity="0.55"/><ellipse cx="430" cy="480" rx="34" ry="11" transform="rotate(-5 430 480)" fill="#7d7a12" opacity="0.6"/><ellipse cx="480" cy="470" rx="22" ry="12" transform="rotate(0 480 470)" fill="#7d7a12" opacity="0.7"/><ellipse cx="250" cy="525" rx="20" ry="7" transform="rotate(-10 250 525)" fill="#7d7a12" opacity="0.5"/><ellipse cx="210" cy="620" rx="20" ry="36" transform="rotate(15 210 620)" fill="#7d7a12"/><ellipse cx="195" cy="585" rx="16" ry="14" transform="rotate(0 195 585)" fill="#7d7a12"/><ellipse cx="215" cy="665" rx="12" ry="18" transform="rotate(0 215 665)" fill="#7d7a12"/><ellipse cx="175" cy="600" rx="14" ry="10" transform="rotate(0 175 600)" fill="#7d7a12"/><ellipse cx="500" cy="505" rx="14" ry="16" transform="rotate(0 500 505)" fill="#7d7a12"/><ellipse cx="169.5" cy="740.5" rx="4" ry="4" transform="rotate(0 169.5 740.5)" fill="#7d7a12"/><ellipse cx="622" cy="494" rx="9" ry="8" transform="rotate(0 622 494)" fill="#7d7a12"/><ellipse cx="622" cy="524" rx="6" ry="10" transform="rotate(0 622 524)" fill="#7d7a12"/><ellipse cx="692" cy="512" rx="9" ry="5" transform="rotate(0 692 512)" fill="#7d7a12"/><ellipse cx="468" cy="500" rx="12" ry="12" transform="rotate(0 468 500)" fill="#7d7a12"/></g></g>
<g clip-path="url(#cland)" style="mix-blend-mode:multiply"><g filter="url(#frel)"><ellipse cx="585" cy="445" rx="38" ry="50" transform="rotate(10 585 445)" fill="#fff"/><ellipse cx="618" cy="470" rx="22" ry="34" transform="rotate(20 618 470)" fill="#fff"/><ellipse cx="600" cy="400" rx="30" ry="26" transform="rotate(0 600 400)" fill="#fff"/><ellipse cx="560" cy="480" rx="22" ry="26" transform="rotate(0 560 480)" fill="#fff"/><ellipse cx="650" cy="420" rx="30" ry="24" transform="rotate(-20 650 420)" fill="#fff"/><ellipse cx="525" cy="455" rx="22" ry="18" transform="rotate(0 525 455)" fill="#fff"/><ellipse cx="545" cy="425" rx="18" ry="22" transform="rotate(0 545 425)" fill="#fff"/><ellipse cx="748" cy="215" rx="14" ry="28" transform="rotate(0 748 215)" fill="#fff" opacity="0.65"/><ellipse cx="740" cy="275" rx="11" ry="40" transform="rotate(5 740 275)" fill="#fff" opacity="0.7"/><ellipse cx="722" cy="330" rx="14" ry="22" transform="rotate(25 722 330)" fill="#fff" opacity="0.7"/><ellipse cx="703" cy="335" rx="12" ry="12" transform="rotate(0 703 335)" fill="#fff" opacity="0.75"/><ellipse cx="695" cy="380" rx="20" ry="22" transform="rotate(0 695 380)" fill="#fff"/><ellipse cx="668" cy="345" rx="14" ry="16" transform="rotate(15 668 345)" fill="#fff"/><ellipse cx="672" cy="395" rx="22" ry="18" transform="rotate(0 672 395)" fill="#fff"/><ellipse cx="783" cy="265" rx="17" ry="45" transform="rotate(-5 783 265)" fill="#fff" opacity="0.7"/><ellipse cx="790" cy="215" rx="10" ry="20" transform="rotate(0 790 215)" fill="#fff" opacity="0.6"/><ellipse cx="738" cy="430" rx="10" ry="25" transform="rotate(10 738 430)" fill="#fff" opacity="0.5"/><ellipse cx="700" cy="165" rx="16" ry="10" transform="rotate(0 700 165)" fill="#fff" opacity="0.6"/><ellipse cx="740" cy="140" rx="22" ry="10" transform="rotate(20 740 140)" fill="#fff" opacity="0.7"/><ellipse cx="745" cy="185" rx="8" ry="10" transform="rotate(0 745 185)" fill="#fff" opacity="0.5"/><ellipse cx="462" cy="562" rx="22" ry="22" transform="rotate(0 462 562)" fill="#fff" opacity="0.85"/><ellipse cx="480" cy="540" rx="15" ry="15" transform="rotate(0 480 540)" fill="#fff" opacity="0.8"/><ellipse cx="442" cy="580" rx="13" ry="11" transform="rotate(0 442 580)" fill="#fff" opacity="0.7"/><ellipse cx="350" cy="572" rx="46" ry="11" transform="rotate(-12 350 572)" fill="#fff"/><ellipse cx="300" cy="590" rx="22" ry="14" transform="rotate(-30 300 590)" fill="#fff"/><ellipse cx="395" cy="560" rx="14" ry="12" transform="rotate(0 395 560)" fill="#fff"/><ellipse cx="340" cy="498" rx="55" ry="10" transform="rotate(-12 340 498)" fill="#fff" opacity="0.6"/><ellipse cx="285" cy="510" rx="28" ry="8" transform="rotate(-15 285 510)" fill="#fff" opacity="0.55"/><ellipse cx="430" cy="480" rx="34" ry="11" transform="rotate(-5 430 480)" fill="#fff" opacity="0.6"/><ellipse cx="480" cy="470" rx="22" ry="12" transform="rotate(0 480 470)" fill="#fff" opacity="0.7"/><ellipse cx="250" cy="525" rx="20" ry="7" transform="rotate(-10 250 525)" fill="#fff" opacity="0.5"/><ellipse cx="210" cy="620" rx="20" ry="36" transform="rotate(15 210 620)" fill="#fff"/><ellipse cx="195" cy="585" rx="16" ry="14" transform="rotate(0 195 585)" fill="#fff"/><ellipse cx="215" cy="665" rx="12" ry="18" transform="rotate(0 215 665)" fill="#fff"/><ellipse cx="175" cy="600" rx="14" ry="10" transform="rotate(0 175 600)" fill="#fff"/><ellipse cx="500" cy="505" rx="14" ry="16" transform="rotate(0 500 505)" fill="#fff"/><ellipse cx="169.5" cy="740.5" rx="4" ry="4" transform="rotate(0 169.5 740.5)" fill="#fff"/><ellipse cx="622" cy="494" rx="9" ry="8" transform="rotate(0 622 494)" fill="#fff"/><ellipse cx="622" cy="524" rx="6" ry="10" transform="rotate(0 622 524)" fill="#fff"/><ellipse cx="692" cy="512" rx="9" ry="5" transform="rotate(0 692 512)" fill="#fff"/><ellipse cx="468" cy="500" rx="12" ry="12" transform="rotate(0 468 500)" fill="#fff"/></g></g>
<path d="M488.4,479.1 494.4,477.1 497.4,483.2 492.4,490.2 484.3,493.2 479.3,498.2 475.3,502.6 473.9,498.6 478.3,492.2 483.9,487.2 486.4,482.2Z M557.6,524.3 562.6,522.3 564.6,526.3 560.6,528.7 557.6,527.3Z M699.4,462.6 702.8,458.8 706.1,461.2 709.5,464.6 712.5,469.3 708.9,469.3 706.1,466.6 702,465.4Z M712.9,459.2 714.9,459.8 716.9,469.3 714.9,469.9 713.5,464.6Z M694.3,381.5 698,378.9 700.4,382.5 698.4,386.5 695.3,384.9Z M746.9,215.9 750.9,215.3 752.5,218.4 749.5,220.4 747.1,218.8Z M772.2,196.3 774.2,196.7 774.6,202.3 773,205.9 770.9,203.3 771.8,200.3Z M702.3,237.4 706.3,235.4 708.7,240.4 706.7,246.1 702.7,245.5 701.3,241.4Z M326.5,464.1 334.5,463.1 335.5,466.1 328.5,467.1Z M340.5,462.1 344.5,461.1 346.5,465.1 342.5,467.1Z" fill="#0f6088"/>
<path d="M437.2,500.2 444.2,500.2 450.2,499.2 456.2,506.2 459.3,509.3 457.2,515.3 454.2,519.3 450.2,517.3 442.2,518.3 434.2,520.3 433.2,514.3 436.2,506.2Z" fill="#a8ee3a" opacity="0.75"/><path d="M568.3,424.3 570.3,430.4 569.3,434.4 572.3,439.4" fill="none" stroke="#e8e8ee" stroke-width="1.6" opacity="0.85"/><path d="M595.4,470.5 597.4,478.5 595.4,486.6 596.4,492.6" fill="none" stroke="#e8e8ee" stroke-width="1.6" opacity="0.85"/><path d="M604.5,452.4 607.5,458.5" fill="none" stroke="#e8e8ee" stroke-width="1.6" opacity="0.85"/><path d="M576.7,466.1 578.7,472.1" fill="none" stroke="#e8e8ee" stroke-width="1.6" opacity="0.85"/><path d="M592.7,475.1 595.7,481.1 594.7,487.2" fill="none" stroke="#e8e8ee" stroke-width="1.6" opacity="0.85"/><path d="M576.4,466.5 578.4,470.5" fill="none" stroke="#e8e8ee" stroke-width="1.6" opacity="0.85"/><path d="M659.7,416.3 661.7,420.3" fill="none" stroke="#e8e8ee" stroke-width="1.6" opacity="0.85"/><path d="M168.2,562.8 176.2,563.2 184.3,567.2 192.3,566.2 193.3,569.2 202.3,572.2 208.4,573.2 210.4,568.2 213.4,565.2 M213.4,541.1 210.4,543.1 206.4,550.1 205.9,558.1 208.4,564.2 212.4,567.2 218.4,572.6 230.4,574.2 237.5,575.2 240.5,571.2 240.9,563.2 M193.3,569.2 190.3,574.2 186.3,578.2 183.3,580.2 M208.4,573.2 207.4,578.2 209.4,582.2 204.3,586.2 198.3,582.6 190.3,586.2 184.7,590.7 M204.3,586.2 210.4,590.3 214.4,591.3 215.4,584.2 220.4,583.8 223.4,589.3 226.4,598.3 228.8,605.3 M228.8,605.3 236.5,605.3 241.5,609.3 248.5,608.3 253.5,606.7 255.5,610.3 258.1,613.9 M228.8,605.3 224.4,606.3 220.4,614.3 216.4,620.4 213.4,624.4 214.4,632.4 211.4,638.4 204.3,641.4 196.3,642.8 189.3,638.4 180.3,638.8 174.2,637.4 M192.3,643.4 192.3,648.5 187.3,653.5 181.3,657.5 178.2,662.5 182.3,664.5 183.3,667.5 M193.3,648.5 197.3,652.5 198.3,660.5 199.3,667.5 204.3,672.6 207.4,678.6 206.4,682.6 M260.2,502.2 259.8,513.3 262.2,519.3 256.2,522.3 248.2,525.3 242.2,529.3 238.1,536.4 236.1,542.8 M262.2,519.3 266.2,522.3 274.3,521.3 277.3,517.3 M277.3,517.3 280.3,510.3 285.3,502.2 291.3,498.8 300.4,499.2 312.4,498.6 311.4,494.2 314.4,491.2 320.4,487.2 325.5,483.2 330.5,486.2 338.5,487.6 344.5,486.8 M277.3,517.3 280.3,524.3 282.3,530.3 286.7,532.7 M310,473.1 312.4,481.1 313.4,490.2 311.4,494.2 M312.4,498.6 316.4,508.2 322.4,516.3 328.5,524.3 330.9,526.7 M344.5,486.8 346.5,498.2 348.5,510.3 349.5,521.3 M348.9,466.1 347.5,474.1 340.5,479.1 337.5,485.2 338.5,487.6 M344.5,486.8 352.6,482.2 357.6,481.1 360.6,474.1 370.6,476.1 372.6,479.1 381.7,475.1 380.7,466.1 M357.6,481.1 359.6,489.2 363.6,497.2 365.6,504.2 370.6,511.3 368.6,517.3 363.6,520.3 364.6,523.3 M363.6,497.2 370.6,496.2 375.6,500.2 382.7,498.2 390.7,500.2 395.7,497.2 398.7,490.2 400.7,483.2 402.7,472.1 403.7,461.1 M381.7,475.1 388.7,483.2 400.7,483.2 408.8,480.1 412.8,484.2 420,486.2 M394.7,497.2 392.7,504.2 395.7,510.3 398.7,512.3 M355.6,555.4 358.6,549.4 360.6,546.4 368.6,544.4 376.6,545.4 386.7,541.4 397.7,542.4 400.7,544.4 M298.4,604.6 298.4,592.6 304.4,589.5 309.4,583.5 311.4,576.5 320.4,574.5 325.5,567.5 330.5,561.4 338.5,558.4 349.5,556.4 355.6,555.4 364.6,558.4 372.6,560.4 376.6,568.5 381.7,574.5 387.7,578.5 M420.1,487.2 427.1,488.2 428.1,482.2 433.2,476.1 436.2,468.1 428.1,462.1 M427.1,488.2 430.1,494.2 436.2,498.2 437.2,502.2 433.2,514.3 434.2,520.3 M436.2,468.1 440.2,477.1 450.2,477.1 457.2,479.1 459.3,472.1 457.2,470.1 M457.2,479.1 466.3,481.1 471.3,483.2 478.3,476.1 485.3,473.1 492.4,470.1 493.4,465.1 498.4,465.1 501.4,460.1 510.4,460.1 520.5,459.1 526.5,454.1 528.5,448 526.5,442 M471.3,483.2 472.3,488.2 466.3,492.6 462.3,497.2 460.3,502.2 464.3,508.2 462.3,513.3 456.2,518.3 454.2,522.3 M436.2,498.2 444.2,500.2 450.2,499.2 456.2,506.2 459.3,509.3 M493.4,465.1 498.4,470.1 502.4,477.1 504.4,483.2 503.4,492.2 504.4,500.2 501.4,506.2 496.4,511.3 490.4,512.3 482.3,511.3 476.3,507.2 473.3,502.2 472.3,488.2 M503.4,492.2 508.4,491.2 512.4,497.2 515.5,500.2 M496.4,511.3 495.4,518.3 492.4,522.3 488.4,528.3 489.4,533.3 484.3,536.4 482.3,540.4 483.3,548.4 488.4,545.4 494.4,546.4 499.4,550.4 M459.3,534.3 461.3,544.4 457.2,549.4 454.2,554.4 456.2,562.4 464.3,563.4 470.3,558.4 476.3,555.4 482.3,552.4 483.3,548.4 M430.1,538.4 440.2,537.4 450.2,537.4 459.3,536.4 462.3,534.3 M459.3,534.3 460.3,528.3 462.3,522.3 460.3,519.3 462.3,513.3 M462.3,522.3 470.3,517.3 478.3,516.3 481.3,524.3 480.3,530.3 486.4,534.3 M515.5,500.2 520.5,492.2 528.5,486.2 532.5,485.2 537.5,491.2 542.6,494.2 550.6,494.2 560.6,493.2 564.6,490.2 565.6,484.2 562.6,478.1 558.6,472.1 552.6,465.1 548.6,470.1 544.6,468.1 541.6,460.1 536.5,454.1 530.5,450 526.5,442 M542.6,494.2 536.5,500.2 531.5,506.2 529.5,514.3 M560.6,493.2 566.6,498.2 574.7,499.2 572.7,506.2 568.6,510.3 558.6,518.3 554.6,522.3 553.6,528.3 M574.7,499.2 582.7,496.2 590.7,494.2 M528.2,407.3 532.2,404.3 535.2,399.3 540.2,397.2 545.2,397.2 M528.2,407.3 530.2,414.3 528.2,424.3 529.2,432.4 526.2,440.4 527.2,450.4 M504.1,433.4 506.1,438.4 516.1,441.4 526.2,446.4 527.2,450.4 M529.2,432.4 538.2,433.4 546.2,428.4 554.3,426.4 562.3,428.4 567.3,430.4 M574.3,399.3 577.4,406.3 578.4,414.3 576.4,422.3 572.3,430.4 568.3,438.4 569.3,444.4 565.3,450.4 566.3,458.5 560.3,464.5 554.3,466.5 M578.4,406.3 584.4,404.3 590.4,405.3 591.4,409.3 598.4,407.3 604.5,405.3 610.5,401.3 620.5,400.3 622.5,406.3 624.5,411.3 M624.5,411.3 620.5,417.3 612.5,423.3 608.5,429.4 612.5,432.4 618.5,436.4 614.5,442.4 616.5,450.4 620.5,458.5 622.5,462.5 M624.5,411.3 632.6,410.3 640.6,405.3 646.6,402.3 650.6,407.3 658.6,410.3 666.7,407.3 676.7,404.3 684.7,401.3 692.8,400.3 700,400.3 M622.5,462.5 632.6,454.5 642.6,448.4 650.6,445.4 658.6,445.4 M656.3,408 660.3,414.1 657.3,422.1 662.3,429.1 659.3,436.1 658.3,443.2 660.3,447.2 668.3,448.2 674.3,450.2 682.4,449.2 688.4,446.2 695.4,443.2 700.4,440.1 702.4,432.1 701.4,422.1 703.4,414.1 700.4,406 696.4,401 M703.4,414.1 710.5,420.1 716.5,419.1 720.5,415.1 724.5,418.1 731.6,420.1 M623.2,460.2 616.1,462.2 606.1,460.2 600.1,463.2 596.1,468.2 595.1,476.3 592,484.3 588,492.3 580,495.3 M623.2,465.2 630.2,469.3 634.2,475.3 640.2,479.3 644.2,482.3 652.3,484.3 660.3,486.3 664.3,494.3 666.3,500.4 M640.2,479.3 638.2,486.3 630.2,491.3 619.1,493.3 612.1,490.3 610.1,496.4 604.1,502.4 601.1,498.4 596.1,494.3 588,492.3 M630.2,491.3 633.2,500.4 629.2,507.4 627.2,514.4 M588,492.3 592,500.4 588,508.4 586,516.4 588,522.4 596.1,526.5 M674.3,450.2 677.4,458.2 678.4,468.2 678.4,478.3 676.4,484.3 M682.4,449.2 684.4,454.2 689.4,458.2 688.4,468.2 696.4,471.3 704.5,473.3 710.5,470.3 718.5,475.3 724.5,480.3 729.5,483.3 M688.4,491.3 696.4,491.3 704.5,487.3 707.5,482.3 710.5,489.3 712.5,490.3 M674.3,511.4 684.4,511.4 689.4,510.4 694.4,512.4 695.4,516.4 M695.3,289.1 703.4,288.1 706.4,293.2 716.4,296.2 722.4,299.2 726.5,305.2 732.5,303.2 737.5,300.2 738.1,290.1 734.5,280.1 738.5,270.1 M726.5,305.2 731.5,313.2 726.5,320.3 728.5,328.3 722.4,336.3 719.4,342.3 719.4,348.4 712.4,351.4 709.4,356.4 708.4,364.4 704.4,368 696.4,367.4 688.3,363.4 682.3,360 M675.3,320.3 681.3,322.3 684.3,327.3 682.3,330.3 688.3,333.3 692.3,337.3 686.3,340.3 681.3,342.3 680.3,350.4 675.3,354.4 678.3,358.4 682.3,360 M682.3,360 677.3,366.4 673.3,370.4 671.3,376.5 664.2,378.5 655.2,381.5 653.2,388.5 651.2,392.5 654.2,398.5 654.2,406.6 M719.4,348.4 728.5,349.4 733.5,353.4 742.5,352.4 M703.3,216.8 709.3,214.3 714.3,216.4 719.4,215.9 724.4,217.4 732.4,218.4 737.4,221.4 740,228.4 739.4,236.4 741.4,244.5 745.5,247.5 M745.5,247.5 752.5,243.4 758.5,240.4 764.5,239.4 772.6,240 774.2,234.4 772.6,229.4 775.6,225.4 782.6,223.4 787.6,221.4 M745.5,247.5 742.4,252.5 742,260.5 738.4,268.5" fill="none" stroke="#fff" stroke-width="1" stroke-linejoin="round"/><path d="M78,696.500 H122.500 L140.500,713.500 V755" fill="none" stroke="#fff" stroke-width="1"/><path d="M246,527h4v4h-4zM256,534h4v4h-4zM218,534h4v4h-4zM213,542h4v4h-4zM218,540h4v4h-4zM193,542h4v4h-4zM205,548h4v4h-4zM191,548h4v4h-4zM187,554h4v4h-4zM192,560h4v4h-4zM200,562h4v4h-4zM210,564h4v4h-4zM218,560h4v4h-4zM140,564h4v4h-4zM157,570h4v4h-4zM178,575h4v4h-4zM182,579h4v4h-4zM197,578h4v4h-4zM224,576h4v4h-4zM245,581h4v4h-4zM253,588h4v4h-4zM157,591h4v4h-4zM146,597h4v4h-4zM235,596h4v4h-4zM258,597h4v4h-4zM192,601h4v4h-4zM192,607h4v4h-4zM172,606h4v4h-4zM210,608h4v4h-4zM215,611h4v4h-4zM244,618h4v4h-4zM196,631h4v4h-4zM172,639h4v4h-4zM186,642h4v4h-4zM200,646h4v4h-4zM227,644h4v4h-4zM186,660h4v4h-4zM179,667h4v4h-4zM221,668h4v4h-4zM196,683h4v4h-4zM200,685h4v4h-4zM346,458h4v4h-4zM363,462h4v4h-4zM358,466h4v4h-4zM392,464h4v4h-4zM384,478h4v4h-4zM299,480h4v4h-4zM278,491h4v4h-4zM259,513h4v4h-4zM243,514h4v4h-4zM305,500h4v4h-4zM309,505h4v4h-4zM307,520h4v4h-4zM341,523h4v4h-4zM364,523h4v4h-4zM364,531h4v4h-4zM326,534h4v4h-4zM322,541h4v4h-4zM308,551h4v4h-4zM350,546h4v4h-4zM292,572h4v4h-4zM289,578h4v4h-4zM290,586h4v4h-4zM299,603h4v4h-4zM406,506h4v4h-4zM424,468h4v4h-4zM442,464h4v4h-4zM448,472h4v4h-4zM420,480h4v4h-4zM477,481h4v4h-4zM500,480h4v4h-4zM495,486h4v4h-4zM470,494h4v4h-4zM491,493h4v4h-4zM486,502h4v4h-4zM466,502h4v4h-4zM448,514h4v4h-4zM450,518h4v4h-4zM454,520h4v4h-4zM448,525h4v4h-4zM467,522h4v4h-4zM469,517h4v4h-4zM484,515h4v4h-4zM483,523h4v4h-4zM503,510h4v4h-4zM504,517h4v4h-4zM495,530h4v4h-4zM444,539h4v4h-4zM432,560h4v4h-4zM519,536h4v4h-4zM516,502h4v4h-4zM517,489h4v4h-4zM521,482h4v4h-4zM524,488h4v4h-4zM523,492h4v4h-4zM532,460h4v4h-4zM541,442h4v4h-4zM546,438h4v4h-4zM537,478h4v4h-4zM555,476h4v4h-4zM567,458h4v4h-4zM572,482h4v4h-4zM587,443h4v4h-4zM602,442h4v4h-4zM592,452h4v4h-4zM592,458h4v4h-4zM603,490h4v4h-4zM539,506h4v4h-4zM537,511h4v4h-4zM529,513h4v4h-4zM548,520h4v4h-4zM565,525h4v4h-4zM575,524h4v4h-4zM573,512h4v4h-4zM601,512h4v4h-4zM670,336h4v4h-4zM696,332h4v4h-4zM660,350h4v4h-4zM697,354h4v4h-4zM633,366h4v4h-4zM630,372h4v4h-4zM638,378h4v4h-4zM689,378h4v4h-4zM616,381h4v4h-4zM599,391h4v4h-4zM591,398h4v4h-4zM632,397h4v4h-4zM668,392h4v4h-4zM566,407h4v4h-4zM545,410h4v4h-4zM520,415h4v4h-4zM535,416h4v4h-4zM590,411h4v4h-4zM595,416h4v4h-4zM606,415h4v4h-4zM511,420h4v4h-4zM511,427h4v4h-4zM498,430h4v4h-4zM504,430h4v4h-4zM594,426h4v4h-4zM628,426h4v4h-4zM642,421h4v4h-4zM665,418h4v4h-4zM695,415h4v4h-4zM681,430h4v4h-4zM639,443h4v4h-4zM656,442h4v4h-4zM668,439h4v4h-4zM693,444h4v4h-4zM641,449h4v4h-4zM659,451h4v4h-4zM673,450h4v4h-4zM659,462h4v4h-4zM669,466h4v4h-4zM696,458h4v4h-4zM614,478h4v4h-4zM647,484h4v4h-4zM671,481h4v4h-4zM670,486h4v4h-4zM683,478h4v4h-4zM702,398h4v4h-4zM708,406h4v4h-4zM736,408h4v4h-4zM713,436h4v4h-4zM710,443h4v4h-4zM699,480h4v4h-4zM610,497h4v4h-4zM634,499h4v4h-4zM642,499h4v4h-4zM656,496h4v4h-4zM684,498h4v4h-4zM663,509h4v4h-4zM673,508h4v4h-4zM697,512h4v4h-4zM676,518h4v4h-4zM705,251h4v4h-4zM727,260h4v4h-4zM760,268h4v4h-4zM760,276h4v4h-4zM706,280h4v4h-4zM718,278h4v4h-4zM749,298h4v4h-4zM687,308h4v4h-4zM738,320h4v4h-4zM756,328h4v4h-4zM715,331h4v4h-4zM710,337h4v4h-4zM741,337h4v4h-4zM747,338h4v4h-4zM728,354h4v4h-4zM716,373h4v4h-4zM742,376h4v4h-4zM717,381h4v4h-4zM708,389h4v4h-4zM716,136h4v4h-4zM745,142h4v4h-4zM714,156h4v4h-4zM723,185h4v4h-4zM715,197h4v4h-4zM738,196h4v4h-4zM761,201h4v4h-4zM768,219h4v4h-4z" fill="#8e1020"/><path d="M246,527h3v3h-3zM256,534h3v3h-3zM218,534h3v3h-3zM213,542h3v3h-3zM218,540h3v3h-3zM193,542h3v3h-3zM205,548h3v3h-3zM191,548h3v3h-3zM187,554h3v3h-3zM192,560h3v3h-3zM200,562h3v3h-3zM210,564h3v3h-3zM218,560h3v3h-3zM140,564h3v3h-3zM157,570h3v3h-3zM178,575h3v3h-3zM182,579h3v3h-3zM197,578h3v3h-3zM224,576h3v3h-3zM245,581h3v3h-3zM253,588h3v3h-3zM157,591h3v3h-3zM146,597h3v3h-3zM235,596h3v3h-3zM258,597h3v3h-3zM192,601h3v3h-3zM192,607h3v3h-3zM172,606h3v3h-3zM210,608h3v3h-3zM215,611h3v3h-3zM244,618h3v3h-3zM196,631h3v3h-3zM172,639h3v3h-3zM186,642h3v3h-3zM200,646h3v3h-3zM227,644h3v3h-3zM186,660h3v3h-3zM179,667h3v3h-3zM221,668h3v3h-3zM196,683h3v3h-3zM200,685h3v3h-3zM346,458h3v3h-3zM363,462h3v3h-3zM358,466h3v3h-3zM392,464h3v3h-3zM384,478h3v3h-3zM299,480h3v3h-3zM278,491h3v3h-3zM259,513h3v3h-3zM243,514h3v3h-3zM305,500h3v3h-3zM309,505h3v3h-3zM307,520h3v3h-3zM341,523h3v3h-3zM364,523h3v3h-3zM364,531h3v3h-3zM326,534h3v3h-3zM322,541h3v3h-3zM308,551h3v3h-3zM350,546h3v3h-3zM292,572h3v3h-3zM289,578h3v3h-3zM290,586h3v3h-3zM299,603h3v3h-3zM406,506h3v3h-3zM424,468h3v3h-3zM442,464h3v3h-3zM448,472h3v3h-3zM420,480h3v3h-3zM477,481h3v3h-3zM500,480h3v3h-3zM495,486h3v3h-3zM470,494h3v3h-3zM491,493h3v3h-3zM486,502h3v3h-3zM466,502h3v3h-3zM448,514h3v3h-3zM450,518h3v3h-3zM454,520h3v3h-3zM448,525h3v3h-3zM467,522h3v3h-3zM469,517h3v3h-3zM484,515h3v3h-3zM483,523h3v3h-3zM503,510h3v3h-3zM504,517h3v3h-3zM495,530h3v3h-3zM444,539h3v3h-3zM432,560h3v3h-3zM519,536h3v3h-3zM516,502h3v3h-3zM517,489h3v3h-3zM521,482h3v3h-3zM524,488h3v3h-3zM523,492h3v3h-3zM532,460h3v3h-3zM541,442h3v3h-3zM546,438h3v3h-3zM537,478h3v3h-3zM555,476h3v3h-3zM567,458h3v3h-3zM572,482h3v3h-3zM587,443h3v3h-3zM602,442h3v3h-3zM592,452h3v3h-3zM592,458h3v3h-3zM603,490h3v3h-3zM539,506h3v3h-3zM537,511h3v3h-3zM529,513h3v3h-3zM548,520h3v3h-3zM565,525h3v3h-3zM575,524h3v3h-3zM573,512h3v3h-3zM601,512h3v3h-3zM670,336h3v3h-3zM696,332h3v3h-3zM660,350h3v3h-3zM697,354h3v3h-3zM633,366h3v3h-3zM630,372h3v3h-3zM638,378h3v3h-3zM689,378h3v3h-3zM616,381h3v3h-3zM599,391h3v3h-3zM591,398h3v3h-3zM632,397h3v3h-3zM668,392h3v3h-3zM566,407h3v3h-3zM545,410h3v3h-3zM520,415h3v3h-3zM535,416h3v3h-3zM590,411h3v3h-3zM595,416h3v3h-3zM606,415h3v3h-3zM511,420h3v3h-3zM511,427h3v3h-3zM498,430h3v3h-3zM504,430h3v3h-3zM594,426h3v3h-3zM628,426h3v3h-3zM642,421h3v3h-3zM665,418h3v3h-3zM695,415h3v3h-3zM681,430h3v3h-3zM639,443h3v3h-3zM656,442h3v3h-3zM668,439h3v3h-3zM693,444h3v3h-3zM641,449h3v3h-3zM659,451h3v3h-3zM673,450h3v3h-3zM659,462h3v3h-3zM669,466h3v3h-3zM696,458h3v3h-3zM614,478h3v3h-3zM647,484h3v3h-3zM671,481h3v3h-3zM670,486h3v3h-3zM683,478h3v3h-3zM702,398h3v3h-3zM708,406h3v3h-3zM736,408h3v3h-3zM713,436h3v3h-3zM710,443h3v3h-3zM699,480h3v3h-3zM610,497h3v3h-3zM634,499h3v3h-3zM642,499h3v3h-3zM656,496h3v3h-3zM684,498h3v3h-3zM663,509h3v3h-3zM673,508h3v3h-3zM697,512h3v3h-3zM676,518h3v3h-3zM705,251h3v3h-3zM727,260h3v3h-3zM760,268h3v3h-3zM760,276h3v3h-3zM706,280h3v3h-3zM718,278h3v3h-3zM749,298h3v3h-3zM687,308h3v3h-3zM738,320h3v3h-3zM756,328h3v3h-3zM715,331h3v3h-3zM710,337h3v3h-3zM741,337h3v3h-3zM747,338h3v3h-3zM728,354h3v3h-3zM716,373h3v3h-3zM742,376h3v3h-3zM717,381h3v3h-3zM708,389h3v3h-3zM716,136h3v3h-3zM745,142h3v3h-3zM714,156h3v3h-3zM723,185h3v3h-3zM715,197h3v3h-3zM738,196h3v3h-3zM761,201h3v3h-3zM768,219h3v3h-3z" fill="#ff4152"/><path d="M317,462h4v4h-4zM341,466h4v4h-4zM315,485h4v4h-4zM298,499h4v4h-4zM319,498h4v4h-4zM294,515h4v4h-4zM364,484h4v4h-4zM387,492h4v4h-4zM396,496h4v4h-4zM391,505h4v4h-4zM373,510h4v4h-4zM384,514h4v4h-4zM411,504h4v4h-4zM328,576h4v4h-4zM311,602h4v4h-4zM502,444h4v4h-4zM487,464h4v4h-4zM469,472h4v4h-4zM424,508h4v4h-4zM464,498h4v4h-4zM431,548h4v4h-4zM537,382h4v4h-4zM540,392h4v4h-4z" fill="#0c7a20"/><path d="M317,462h3v3h-3zM341,466h3v3h-3zM315,485h3v3h-3zM298,499h3v3h-3zM319,498h3v3h-3zM294,515h3v3h-3zM364,484h3v3h-3zM387,492h3v3h-3zM396,496h3v3h-3zM391,505h3v3h-3zM373,510h3v3h-3zM384,514h3v3h-3zM411,504h3v3h-3zM328,576h3v3h-3zM311,602h3v3h-3zM502,444h3v3h-3zM487,464h3v3h-3zM469,472h3v3h-3zM424,508h3v3h-3zM464,498h3v3h-3zM431,548h3v3h-3zM537,382h3v3h-3zM540,392h3v3h-3z" fill="#38f050"/><path d="M359,491h4v4h-4zM355,503h4v4h-4zM355,514h4v4h-4zM323,522h4v4h-4zM360,534h4v4h-4zM364,538h4v4h-4zM360,545h4v4h-4zM383,534h4v4h-4zM400,543h4v4h-4zM405,540h4v4h-4zM398,566h4v4h-4zM348,570h4v4h-4zM364,575h4v4h-4zM441,486h4v4h-4zM439,494h4v4h-4zM449,496h4v4h-4zM489,510h4v4h-4zM460,522h4v4h-4zM441,531h4v4h-4z" fill="#00005a"/><path d="M359,491h3v3h-3zM355,503h3v3h-3zM355,514h3v3h-3zM323,522h3v3h-3zM360,534h3v3h-3zM364,538h3v3h-3zM360,545h3v3h-3zM383,534h3v3h-3zM400,543h3v3h-3zM405,540h3v3h-3zM398,566h3v3h-3zM348,570h3v3h-3zM364,575h3v3h-3zM441,486h3v3h-3zM439,494h3v3h-3zM449,496h3v3h-3zM489,510h3v3h-3zM460,522h3v3h-3zM441,531h3v3h-3z" fill="#1a22d0"/><path d="M455,506h4v4h-4zM457,522h4v4h-4zM445,530h4v4h-4z" fill="#8a8a8a"/><path d="M455,506h3v3h-3zM457,522h3v3h-3zM445,530h3v3h-3z" fill="#ffffff"/>
</svg>
</svg><!--/MAP-->
</body>
</html>
